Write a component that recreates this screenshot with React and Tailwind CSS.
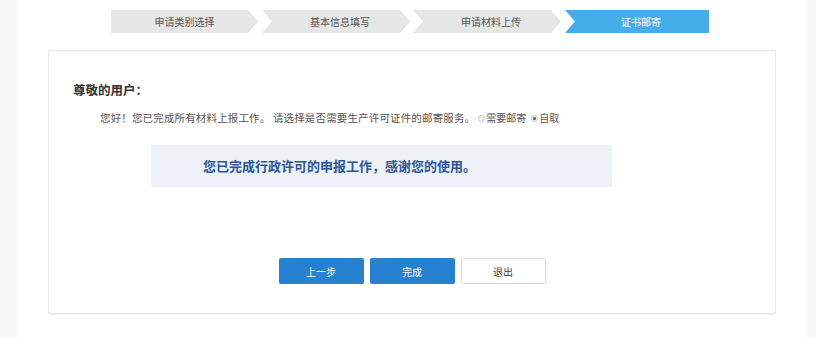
import React from "react";

const font = { fontFamily: '"Noto Sans CJK SC", "Noto Sans", sans-serif' };

function Radio({ checked, className = "" }) {
  return (
    <span className={"inline-flex items-center justify-center w-[7px] h-[7px] rounded-full border border-[#c8c8c8] bg-[#f0f0f0] mr-[1px] " + className}>
      {checked && <span className="w-[3px] h-[3px] rounded-full bg-[#555]" />}
    </span>
  );
}

export default function App() {
  return (
    <div className="w-[816px] h-[338px] bg-[#f7f7f7] flex overflow-hidden" style={font}>
      <div className="ml-[17px] w-[790px] h-full bg-white flex flex-col">
        {/* steps */}
        <div className="mt-[10px] ml-[94px] flex h-[23px]">
          <div className="w-[147px] h-full bg-[#e6e6e6] flex items-center justify-center text-[10px] text-[#555] [clip-path:polygon(0_0,calc(100%-10px)_0,100%_50%,calc(100%-10px)_100%,0_100%)]">
            申请类别选择
          </div>
          <div className="ml-[4px] w-[148px] h-full bg-[#e6e6e6] flex items-center justify-center pl-[8px] text-[10px] text-[#555] [clip-path:polygon(0_0,calc(100%-10px)_0,100%_50%,calc(100%-10px)_100%,0_100%,10px_50%)]">
            基本信息填写
          </div>
          <div className="ml-[3px] w-[148px] h-full bg-[#e6e6e6] flex items-center justify-center pl-[8px] text-[10px] text-[#555] [clip-path:polygon(0_0,calc(100%-10px)_0,100%_50%,calc(100%-10px)_100%,0_100%,10px_50%)]">
            申请材料上传
          </div>
          <div className="ml-[4px] w-[144px] h-full bg-[#45aeea] flex items-center justify-center pl-[8px] text-[10px] text-white [clip-path:polygon(0_0,100%_0,100%_100%,0_100%,10px_50%)]">
            证书邮寄
          </div>
        </div>

        {/* card */}
        <div className="mt-[17px] ml-[31px] w-[728px] h-[264px] border border-[#e6e6e6] shadow-[0_1px_0_#efefef] rounded-[2px] flex flex-col pt-[29px]">
          <div className="pl-[24px] text-[12.5px] leading-[20px] font-bold text-[#333]">尊敬的用户：</div>
          <div className="mt-[8px] pl-[51px] text-[10.5px] leading-[20px] text-[#555] flex items-center whitespace-nowrap">
            <span className="tracking-[0.15px]">您好！您已完成所有材料上报工作。 请选择是否需要生产许可证件的邮寄服务。</span>
            <Radio className="ml-[3px]" />
            <span className="text-[10px]">需要邮寄</span>
            <Radio checked className="ml-[5px]" />
            <span className="text-[10px]">自取</span>
          </div>
          <div className="mt-[17px] ml-[102px] w-[461px] h-[42px] bg-[#eef2f8] flex items-center pl-[52px] text-[13px] font-bold text-[#2b5598]">
            您已完成行政许可的申报工作，感谢您的使用。
          </div>
          <div className="mt-[71px] flex justify-center gap-[6px]">
            <button className="w-[85px] h-[26px] bg-[#2681d0] rounded-[2px] text-white text-[10px]">上一步</button>
            <button className="w-[85px] h-[26px] bg-[#2681d0] rounded-[2px] text-white text-[10px]">完成</button>
            <button className="w-[85px] h-[26px] bg-white border border-[#dcdcdc] rounded-[2px] text-[#444] text-[10px]">退出</button>
          </div>
        </div>
      </div>
    </div>
  );
}
